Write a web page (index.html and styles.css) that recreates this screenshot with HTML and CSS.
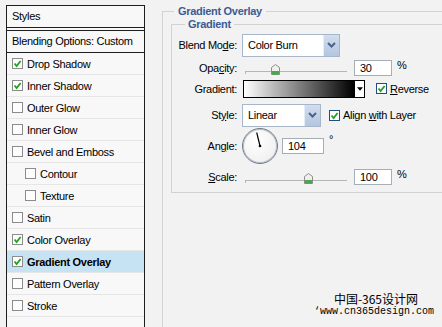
FILE: index.html
```html
<!DOCTYPE html>
<html lang="en">
<head>
  <meta charset="UTF-8" />
  <title>Layer Style - Gradient Overlay</title>
  <link rel="stylesheet" href="styles.css">
</head>
<body>
  <div class="styles-list">
    <div class="list-head">Styles</div>
    <div class="list-blend">Blending Options: Custom</div>
    <div class="list-row"><span class="chk on"><svg viewBox="0 0 9 9"><path d="M1.5 4.5 L3.6 7 L7.6 2"/></svg></span>Drop Shadow</div>
    <div class="list-row"><span class="chk on"><svg viewBox="0 0 9 9"><path d="M1.5 4.5 L3.6 7 L7.6 2"/></svg></span>Inner Shadow</div>
    <div class="list-row"><span class="chk"></span>Outer Glow</div>
    <div class="list-row"><span class="chk"></span>Inner Glow</div>
    <div class="list-row"><span class="chk"></span>Bevel and Emboss</div>
    <div class="list-row sub"><span class="chk"></span>Contour</div>
    <div class="list-row sub"><span class="chk"></span>Texture</div>
    <div class="list-row"><span class="chk"></span>Satin</div>
    <div class="list-row"><span class="chk on"><svg viewBox="0 0 9 9"><path d="M1.5 4.5 L3.6 7 L7.6 2"/></svg></span>Color Overlay</div>
    <div class="list-row active"><span class="chk on"><svg viewBox="0 0 9 9"><path d="M1.5 4.5 L3.6 7 L7.6 2"/></svg></span>Gradient Overlay</div>
    <div class="list-row"><span class="chk"></span>Pattern Overlay</div>
    <div class="list-row"><span class="chk"></span>Stroke</div>
  </div>

  <div class="settings">
    <fieldset class="outer">
      <legend>Gradient Overlay</legend>
      <fieldset class="inner">
        <legend>Gradient</legend>

        <div class="row row-blend">
          <label>Blend Mo<u>d</u>e:</label>
          <div class="select wide"><span>Color Burn</span><span class="drop"><svg viewBox="0 0 9 6"><path d="M1 1 L4.5 4.5 L8 1"/></svg></span></div>
        </div>

        <div class="row row-opacity">
          <label>Opa<u>c</u>ity:</label>
          <div class="slider"><span class="thumb" style="left: 26px"><svg viewBox="0 0 9 11"><path class="cap" d="M0.5 3.5 L4.5 0.5 L8.5 3.5 L8.5 10.5 L0.5 10.5 Z"/><rect x="1" y="7" width="7" height="3.5"/></svg></span></div>
          <div class="num">30</div>
          <span class="unit">%</span>
        </div>

        <div class="row row-gradient">
          <label>Gradient:</label>
          <div class="swatch"></div>
          <div class="swatch-drop"><svg viewBox="0 0 7 4"><path d="M0 0 H7 L3.5 4 Z"/></svg></div>
          <span class="chk dark on"><svg viewBox="0 0 9 9"><path d="M1.5 4.5 L3.6 7 L7.6 2"/></svg></span>
          <span class="opt"><u>R</u>everse</span>
        </div>

        <div class="row row-style">
          <label>St<u>y</u>le:</label>
          <div class="select narrow"><span>Linear</span><span class="drop"><svg viewBox="0 0 9 6"><path d="M1 1 L4.5 4.5 L8 1"/></svg></span></div>
          <span class="chk dark on"><svg viewBox="0 0 9 9"><path d="M1.5 4.5 L3.6 7 L7.6 2"/></svg></span>
          <span class="opt">Align <u>w</u>ith Layer</span>
        </div>

        <div class="row row-angle">
          <label>An<u>g</u>le:</label>
          <div class="dial"><svg viewBox="0 0 34 34"><line x1="17" y1="17" x2="13.7" y2="3.5"/><circle cx="17" cy="17" r="1.3"/></svg></div>
          <div class="num angle">104</div>
          <span class="deg">°</span>
        </div>

        <div class="row row-scale">
          <label><u>S</u>cale:</label>
          <div class="slider"><span class="thumb" style="left: 59px"><svg viewBox="0 0 9 11"><path class="cap" d="M0.5 3.5 L4.5 0.5 L8.5 3.5 L8.5 10.5 L0.5 10.5 Z"/><rect x="1" y="7" width="7" height="3.5"/></svg></span></div>
          <div class="num">100</div>
          <span class="unit">%</span>
        </div>
      </fieldset>
    </fieldset>
  </div>

  <div class="watermark">
    <div class="wm-cn">中国-365设计网</div>
    <div class="wm-url">‘www.cn365design.com</div>
  </div>
</body>
</html>
```

FILE: styles.css
```css
* { box-sizing: border-box; }
body {
  margin: 0;
  width: 442px;
  height: 327px;
  overflow: hidden;
  background-color: #f2f2f2;
  color: #000;
  font-family: "Liberation Sans", Arial, sans-serif;
  font-size: 11px;
  letter-spacing: -0.3px;
  display: flex;
  align-items: flex-start;
  position: relative;
}

/* left list */
.styles-list {
  margin: 5px 0 0 6px;
  width: 139px;
  height: 340px;
  border: 1px solid #1e1e1e;
  background-color: #f8f8f8;
  flex-shrink: 0;
}
.list-head {
  height: 25px;
  padding-left: 5px;
  line-height: 21px;
  border-bottom: 4px double #1e1e1e;
}
.list-blend {
  height: 22px;
  padding-left: 5px;
  line-height: 21px;
  border-bottom: 1px solid #1e1e1e;
}
.list-row {
  height: 22px;
  padding-left: 5px;
  border-bottom: 1px solid #e6e6e6;
  display: flex;
  align-items: center;
  gap: 4px;
}
.list-row.sub { padding-left: 18px; }
.list-row.active {
  background-color: #c6e3f4;
  font-weight: bold;
}

.chk {
  width: 11px;
  height: 11px;
  border: 1px solid #8c8c8c;
  background-color: #fdfdfd;
  display: inline-flex;
  align-items: center;
  justify-content: center;
  flex-shrink: 0;
}
.chk.dark { border-color: #1f4f7c; }
.chk svg { width: 9px; height: 9px; }
.chk path {
  fill: none;
  stroke: #22a022;
  stroke-width: 1.8;
}

/* right side */
.settings {
  flex-shrink: 0;
  width: 320px;
  padding-left: 17px;
}
fieldset {
  margin: 0;
  padding: 0;
  border: 1px solid #d2d2d2;
  border-right: none;
  min-width: 0;
}
legend {
  font-weight: bold;
  color: #3a5b94;
  line-height: 13px;
  padding: 0 4px;
}
.outer {
  margin-top: 5px;
  height: 340px;
  padding-left: 8px;
}
.outer > legend { margin-left: 3px; }
.inner {
  padding: 2px 0 7px 0;
}
.inner > legend { margin-left: 13px; padding: 0 3px; }

.row {
  display: flex;
  align-items: center;
}
.row label {
  width: 65px;
  text-align: right;
  margin-right: 5px;
  flex-shrink: 0;
}
.row-blend { height: 24px; }
.row-opacity { height: 17px; margin-top: 2px; }
.row-gradient { height: 19px; margin-top: 3px; }
.row-style { height: 24px; margin-top: 5px; }
.row-angle { height: 36px; margin-top: 1px; }
.row-scale { height: 17px; margin-top: 4px; }

.select {
  height: 23px;
  border: 1px solid #a7b6c9;
  background-color: #fff;
  display: flex;
  align-items: center;
  justify-content: space-between;
  padding-left: 5px;
}
.select.wide { width: 98px; }
.select.narrow { width: 79px; }
.select .drop {
  width: 16px;
  height: 21px;
  background: linear-gradient(#d2def0, #b3c5e0);
  border-left: 1px solid #e6edf7;
  display: flex;
  align-items: center;
  justify-content: center;
}
.drop svg { width: 9px; height: 6px; }
.drop path { fill: none; stroke: #4d6288; stroke-width: 2; }

.slider {
  position: relative;
  width: 102px;
  height: 11px;
  margin-left: 3px;
  border-bottom: 1px solid #b6b6b6;
  margin-bottom: 2px;
}
.slider::before {
  content: "";
  position: absolute;
  left: 0;
  bottom: -3px;
  width: 1px;
  height: 3px;
  background-color: #b6b6b6;
}
.thumb {
  position: absolute;
  top: 3px;
  width: 9px;
  height: 11px;
}
.thumb svg { display: block; width: 9px; height: 11px; }
.thumb .cap { fill: #efefef; stroke: #8d8d8d; stroke-width: 1; }
.thumb rect { fill: #49a84a; }

.num {
  width: 38px;
  height: 16px;
  border: 1px solid #a5adb7;
  background-color: #fff;
  padding-left: 5px;
  line-height: 14px;
  margin-left: 7px;
}
.unit { margin-left: 5px; margin-top: -6px; }

.swatch {
  width: 112px;
  height: 18px;
  margin-left: 1px;
  border: 1px solid #000;
  background: linear-gradient(to right, #fff, #000);
}
.swatch-drop {
  width: 10px;
  height: 18px;
  border: 1px solid #000;
  border-left: none;
  background-color: #fff;
  display: flex;
  align-items: center;
  justify-content: center;
}
.swatch-drop svg { width: 6px; height: 4px; }
.swatch-drop path { fill: #000; }
.row-gradient .chk { margin-left: 11px; }
.row-style .chk { margin-left: 8px; }
.opt { margin-left: 3px; }

.dial {
  width: 36px;
  height: 36px;
  border: 1px solid #6f7b8a;
  box-shadow: inset 0 0 0 1px #b9c1cb;
  border-radius: 50%;
  background: radial-gradient(circle at 40% 35%, #ffffff, #ebebeb);
}
.dial svg { display: block; width: 34px; height: 34px; }
.dial line { stroke: #000; stroke-width: 1.2; }
.dial circle { fill: #000; }
.num.angle { width: 42px; margin-left: 4px; }
.deg { margin-left: 5px; margin-top: -14px; }

.watermark {
  position: absolute;
  left: 314px;
  top: 292px;
  text-align: right;
  letter-spacing: 0;
  font-family: "Liberation Mono", "Noto Sans CJK SC", monospace;
}
.wm-cn {
  font-family: "Noto Sans CJK SC", sans-serif;
  font-size: 12px;
  line-height: 14px;
  padding-right: 16px;
}
.wm-url {
  font-size: 10px;
  line-height: 12px;
}
```
